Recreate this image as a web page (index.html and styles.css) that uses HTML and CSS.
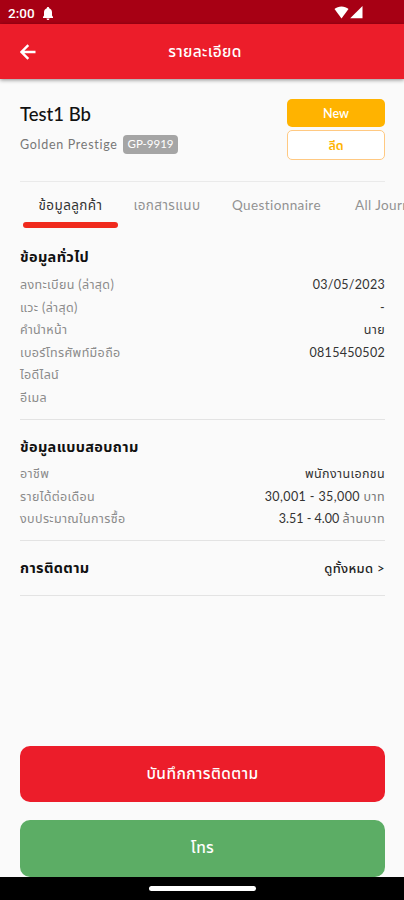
FILE: index.html
```html
<!DOCTYPE html>
<html lang="th">
<head>
  <meta charset="UTF-8" />
  <meta name="viewport" content="width=device-width, initial-scale=1" />
  <title>รายละเอียด</title>
  <link rel="stylesheet" href="styles.css">
</head>
<body>

<div class="status-bar">
  <span class="clock">2:00</span>
  <svg class="bell" viewBox="0 0 10 13"><path d="M5 0c.7 0 1.2.5 1.2 1.3C8 2 9 3.400 9 5.200v3.300l1 1.500v1H0v-1l1-1.500V5.200C1 3.400 2 2 3.800 1.300 3.800.5 4.300 0 5 0zM3.500 11.400h3c0 .9-.6 1.500-1.500 1.500s-1.500-.6-1.500-1.500z" fill="#fff"/></svg>
  <svg class="signal" viewBox="0 0 29 13"><path d="M0.500 3C4-.4 11-.4 14.500 3L7.500 12.500z" fill="#fff"/><path d="M28.500 0v12.300H16.200z" fill="#fff"/></svg>
</div>

<header class="app-bar">
  <svg class="back" viewBox="0 0 16 16"><path d="M15.500 8H2M8.300 1.200L1.500 8l6.800 6.800" fill="none" stroke="#fff" stroke-width="2.400"/></svg>
  <h1>รายละเอียด</h1>
</header>

<main class="content">
  <section class="customer">
    <div class="info">
      <h2>Test1 Bb</h2>
      <p><span class="project">Golden Prestige</span><span class="unit">GP-9919</span></p>
    </div>
    <div class="badges">
      <span class="badge filled">New</span>
      <span class="badge outline">ลีด</span>
    </div>
  </section>

  <nav class="tabs">
    <a class="tab active">ข้อมูลลูกค้า</a>
    <a class="tab documents">เอกสารแนบ</a>
    <a class="tab questionnaire">Questionnaire</a>
    <a class="tab journey">All Journey</a>
  </nav>

  <section class="group general">
    <h3>ข้อมูลทั่วไป</h3>
    <dl>
      <div class="row"><dt>ลงทะเบียน (ล่าสุด)</dt><dd class="number">03/05/2023</dd></div>
      <div class="row"><dt>แวะ (ล่าสุด)</dt><dd>-</dd></div>
      <div class="row"><dt>คำนำหน้า</dt><dd>นาย</dd></div>
      <div class="row"><dt>เบอร์โทรศัพท์มือถือ</dt><dd class="number">0815450502</dd></div>
      <div class="row"><dt>ไอดีไลน์</dt><dd></dd></div>
      <div class="row"><dt>อีเมล</dt><dd></dd></div>
    </dl>
  </section>

  <section class="group survey">
    <h3>ข้อมูลแบบสอบถาม</h3>
    <dl>
      <div class="row"><dt>อาชีพ</dt><dd>พนักงานเอกชน</dd></div>
      <div class="row"><dt>รายได้ต่อเดือน</dt><dd class="income">30,001 - 35,000 <small>บาท</small></dd></div>
      <div class="row"><dt>งบประมาณในการซื้อ</dt><dd class="budget">3.51 - 4.00 <small>ล้านบาท</small></dd></div>
    </dl>
  </section>

  <section class="follow">
    <h3>การติดตาม</h3>
    <a>ดูทั้งหมด &gt;</a>
  </section>
</main>

<footer class="actions">
  <button class="save">บันทึกการติดตาม</button>
  <button class="call">โทร</button>
</footer>
<div class="system-nav"><span></span></div>

</body>
</html>
```
FILE: styles.css
```css
:root {
  --red: #ec1d2a;
  --amber: #ffb300;
  --green: #5cad65;
  --line: #e3e3e3;
  --muted: #8b8b8b;
}

* {
  box-sizing: border-box;
}

body {
  margin: 0;
  height: 900px;
  display: flex;
  flex-direction: column;
  overflow: hidden;
  background: #fafafa;
  color: #333;
  font-family: Lato, "Noto Sans Thai", "Noto Sans", sans-serif;
  font-size: 12.5px;
  letter-spacing: 0.35px;
}

h1, h2, h3, p, dl, dd {
  margin: 0;
}

.status-bar {
  flex: none;
  height: 24px;
  padding: 2px 41px 0 8px;
  display: flex;
  align-items: center;
  background: #a70014;
  color: #fff;
}

.clock {
  width: 35px;
  font: 500 13.5px Roboto, sans-serif;
  letter-spacing: 0;
}

.bell {
  width: 10px;
  height: 13px;
}

.signal {
  width: 29px;
  height: 13px;
  margin-left: auto;
  margin-top: -2px;
}

.app-bar {
  flex: none;
  height: 55px;
  display: grid;
  grid-template-columns: 20px 1fr 20px;
  align-items: center;
  padding: 0 14px 0 20px;
  background: var(--red);
  color: #fff;
  box-shadow: 0 1px 4px rgba(0, 0, 0, 0.45);
}

.back {
  width: 16px;
  height: 16px;
}

h1 {
  padding-top: 1px;
  font-size: 15.5px;
  font-weight: 500;
  text-align: center;
}

.content {
  flex: 1;
  padding: 0 19px 0 20px;
}

.customer {
  height: 103px;
  display: flex;
  justify-content: space-between;
  padding-top: 20px;
  border-bottom: 1px solid #eaeaea;
}

h2 {
  margin-top: 3px;
  font: 500 18.5px/24px Lato, sans-serif;
  letter-spacing: 0;
  color: #111;
}

.info p {
  display: flex;
  align-items: center;
  margin-top: 9px;
}

.project {
  width: 103px;
  letter-spacing: 0.7px;
  color: #777;
  white-space: nowrap;
}

.unit {
  width: 55px;
  height: 19px;
  border-radius: 4px;
  background: #a5a5a5;
  color: #fff;
  font-size: 11.5px;
  letter-spacing: 0;
  line-height: 18px;
  text-align: center;
}

.badges {
  width: 98px;
  display: flex;
  flex-direction: column;
  gap: 3px;
}

.badge {
  height: 28px;
  border-radius: 5px;
  font-weight: 600;
  letter-spacing: 0;
  line-height: 29px;
  text-align: center;
}

.badge.filled {
  background: var(--amber);
  color: #fff;
}

.badge.outline {
  height: 30px;
  border: 1px solid #ffc982;
  background: #fff;
  color: var(--amber);
}

.tabs {
  height: 46px;
  display: flex;
  margin-left: 3px;
  margin-right: -19px;
  overflow: hidden;
  color: #929292;
  line-height: 46px;
  white-space: nowrap;
}

.tab {
  flex: none;
  font-size: 13.5px;
  letter-spacing: 0.4px;
}

.tab.active {
  display: flex;
  flex-direction: column;
  width: 95px;
  text-align: center;
  color: #333;
}

.tab.active::after {
  content: "";
  height: 6px;
  margin-top: -6px;
  border-radius: 3px;
  background: #f02a1d;
}

.documents {
  width: 98px;
  text-align: center;
}

.questionnaire {
  width: 124px;
  padding-left: 16px;
}

.journey {
  padding-left: 15px;
}

.group {
  border-bottom: 1px solid var(--line);
}

.general {
  height: 192px;
  padding-top: 18px;
}

.survey {
  height: 121px;
  padding-top: 16px;
}

h3 {
  font-size: 14.5px;
  font-weight: 700;
  line-height: 22px;
  color: #111;
}

.general h3 {
  margin-bottom: 5px;
}

.survey h3 {
  margin-bottom: 4px;
}

.row {
  height: 22.5px;
  display: flex;
  justify-content: space-between;
  line-height: 23px;
}

dt {
  color: var(--muted);
}

.number {
  letter-spacing: 0.3px;
}

.income {
  letter-spacing: 0.4px;
}

.budget {
  letter-spacing: 0;
}

small {
  font-size: 12.5px;
  letter-spacing: 0.4px;
  color: #777;
}

.follow {
  height: 55px;
  display: flex;
  align-items: center;
  justify-content: space-between;
  border-bottom: 1px solid var(--line);
}

.follow a {
  font-size: 13px;
  font-weight: 500;
  padding-top: 2px;
  color: #222;
}

.actions {
  flex: none;
  display: grid;
  gap: 18px;
  padding: 0 19px 0 20px;
}

.actions button {
  height: 57px;
  border: 0;
  border-radius: 10px;
  color: #fff;
  font: 500 15.5px Lato, "Noto Sans Thai", sans-serif;
  letter-spacing: 0.4px;
}

.actions .save {
  height: 56px;
  background: var(--red);
}

.actions .call {
  background: var(--green);
}

.system-nav {
  flex: none;
  height: 23px;
  display: flex;
  justify-content: center;
  padding-top: 9px;
  background: #000;
}

.system-nav span {
  width: 107px;
  height: 5px;
  border-radius: 3px;
  background: #fff;
}
```
